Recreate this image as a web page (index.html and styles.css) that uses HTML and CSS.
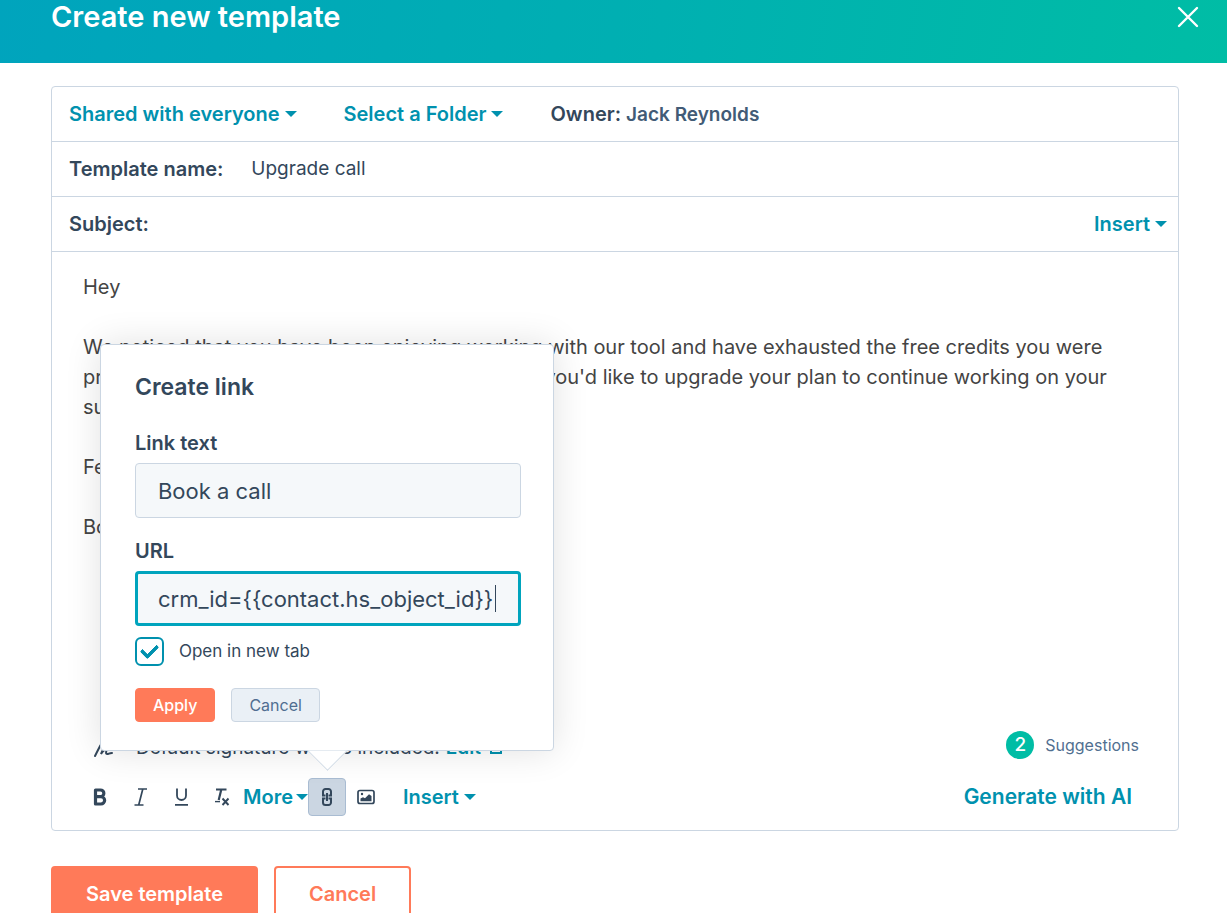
FILE: index.html
```
<!DOCTYPE html>
<html lang="en">
<head>
    <meta charset="UTF-8">
    <meta name="viewport" content="width=device-width, initial-scale=1.0">
    <title>Create new template</title>
    <link rel="stylesheet" href="styles.css">
</head>

<body>
    <header>
        <h1>Create new template</h1>
        <button class="close-button" aria-label="Close">
            <svg width="22" height="22" viewBox="0 0 22 22"><path d="M2 2l18 18M20 2L2 20" fill="none" stroke="#fff" stroke-width="2.4" stroke-linecap="round"/></svg>
        </button>
    </header>

    <main>
        <div class="template">
            <div class="row sharing">
                <button class="dropdown">Shared with everyone</button>
                <button class="dropdown">Select a Folder</button>
                <div class="owner">Owner: <span>Jack Reynolds</span></div>
            </div>
            <div class="row">
                <label for="template-name">Template name:</label>
                <input type="text" id="template-name" class="plain-input" value="Upgrade call">
            </div>
            <div class="row">
                <label for="subject">Subject:</label>
                <input type="text" id="subject" class="plain-input">
                <button class="dropdown">Insert</button>
            </div>

            <div class="editor">
                <p>Hey</p>
                <p>We noticed that you have been enjoying working with our tool and have exhausted the free credits you were<br>
                provided. Please book the call with us anytime if you'd like to upgrade your plan to continue working on your<br>
                success.</p>
                <p>Feel free to pick a time.</p>
                <p>Book a call</p>
            </div>

            <div class="signature">
                <div class="signature-note">
                    <svg width="20" height="20" viewBox="0 0 20 20"><path d="M1 18C5 10 8 3 11 3s-2 8-4 13c2-3 4-5 5-4s-1 4 1 4 2-1 5-1" fill="none" stroke="#33475b" stroke-width="2" stroke-linecap="round"/></svg>
                    <span>Default signature will be included.</span>
                    <a href="#">Edit
                        <svg width="14" height="14" viewBox="0 0 14 14"><path d="M6 2H2v10h10V8M8 1h5v5M13 1L6 8" fill="none" stroke="#0091ae" stroke-width="2"/></svg>
                    </a>
                </div>
                <div class="suggestions"><span class="count">2</span>Suggestions</div>
            </div>

            <div class="toolbar">
                <button class="tool" aria-label="Bold">
                    <svg width="18" height="20" viewBox="0 0 18 20"><path d="M4.500 3h5a3.300 3.300 0 0 1 0 6.700h-5zM4.500 9.700h5.500a3.600 3.600 0 0 1 0 7.300H4.500z" fill="none" stroke="#33475b" stroke-width="3.200" stroke-linejoin="round"/></svg>
                </button>
                <button class="tool" aria-label="Italic">
                    <svg width="18" height="20" viewBox="0 0 18 20"><path d="M6 2h9M2.500 18h9M10.800 2L6.700 18" fill="none" stroke="#33475b" stroke-width="1.700"/></svg>
                </button>
                <button class="tool" aria-label="Underline">
                    <svg width="18" height="20" viewBox="0 0 18 20"><path d="M4 1.500v7a4.500 4.500 0 0 0 9 0v-7M2 17.800h13" fill="none" stroke="#33475b" stroke-width="1.800"/></svg>
                </button>
                <button class="tool" aria-label="Clear formatting">
                    <svg width="18" height="20" viewBox="0 0 18 20"><path d="M2 2.500h10.500M7.300 2.500L4.700 13" fill="none" stroke="#33475b" stroke-width="2.200"/><path d="M1 14.600h5" stroke="#33475b" stroke-width="1.400"/><path d="M8.500 11.500l6 6.500M14.500 11.500l-6 6.500" fill="none" stroke="#33475b" stroke-width="1.900"/></svg>
                </button>
                <button class="dropdown more">More</button>
                <div class="link-tool">
                    <button class="tool active" aria-label="Link">
                        <svg width="18" height="20" viewBox="0 0 18 20"><path d="M7.500 8.500h-2.500V4.500a2.500 2.500 0 0 1 2.500-2.500h3A2.500 2.500 0 0 1 13 4.500v4h-2.500M7.500 11.500H5V15.500A2.500 2.500 0 0 0 7.500 18h3a2.500 2.500 0 0 0 2.500-2.500v-4h-2.500M9 6v8" fill="none" stroke="#33475b" stroke-width="2"/></svg>
                    </button>
                    <form class="popover">
                        <h2>Create link</h2>
                        <label for="link-text">Link text</label>
                        <input type="text" id="link-text" value="Book a call">
                        <label for="link-url">URL</label>
                        <input type="text" id="link-url" class="focused" value="crm_id={{contact.hs_object_id}}">
                        <div class="check-row">
                            <input type="checkbox" id="new-tab" checked>
                            <label for="new-tab">Open in new tab</label>
                        </div>
                        <div class="popover-actions">
                            <button type="button" class="apply">Apply</button>
                            <button type="button" class="cancel">Cancel</button>
                        </div>
                    </form>
                </div>
                <button class="tool" aria-label="Image">
                    <svg width="20" height="20" viewBox="0 0 20 20"><rect x="2" y="3.500" width="16" height="13" rx="2" fill="none" stroke="#33475b" stroke-width="1.700"/><path d="M4.500 14.300v-2.800l2.500-1.200 2 1 4-4 2.500 1.700v5.300z" fill="#33475b"/><circle cx="6" cy="7" r="1.200" fill="#33475b"/></svg>
                </button>
                <button class="dropdown insert">Insert</button>
                <button class="generate">Generate with AI</button>
            </div>
        </div>

        <div class="actions">
            <button class="save">Save template</button>
            <button class="discard">Cancel</button>
        </div>
    </main>
</body>
</html>
```
FILE: styles.css
```
* {
    box-sizing: border-box;
}

body {
    font-family: Inter, "Liberation Sans", sans-serif;
    font-size: 20px;
    line-height: 30px;
    color: #33475b;
    background-color: #fff;
    margin: 0;
    height: 100vh;
    overflow: hidden;
}

button,
input {
    font: inherit;
    color: inherit;
    margin: 0;
}

button {
    border: none;
    background: none;
    padding: 0;
    cursor: pointer;
    white-space: nowrap;
}

svg {
    display: block;
}

header {
    display: flex;
    justify-content: space-between;
    align-items: center;
    padding: 0 28px 29px 51px;
    background: linear-gradient(100deg, #00a4bd, #00afb2 50%, #00bda5);
}

h1 {
    margin: 0;
    font-size: 29px;
    line-height: 34px;
    font-weight: 600;
    color: white;
}

main {
    padding: 23px 48px 0 51px;
}

.template {
    border: 1px solid #cbd6e2;
    border-radius: 4px;
}

.row {
    display: flex;
    align-items: center;
    height: 55px;
    padding: 0 11px 0 17px;
    border-bottom: 1px solid #cbd6e2;
}

.row label,
.owner {
    font-weight: 600;
}

.sharing {
    gap: 47px;
}

.owner span {
    font-size: 19px;
    color: #425b76;
}

.plain-input {
    flex: 1;
    min-width: 0;
    border: none;
    outline: none;
    background: none;
    padding: 0;
    margin-left: 28px;
    font-size: 19px;
}

.dropdown {
    display: flex;
    align-items: center;
    gap: 5px;
    font-weight: 600;
    color: #0091ae;
}

.dropdown::after {
    content: "";
    border: 6px solid transparent;
    border-top-color: #0091ae;
    border-bottom: none;
}

.editor {
    min-height: 478px;
    padding: 20px 31px 0;
    color: #444;
}

.editor p {
    margin: 0 0 30px;
    white-space: nowrap;
}

.signature {
    display: flex;
    align-items: center;
    justify-content: space-between;
    padding: 0 39px 0 42px;
    height: 30px;
    font-size: 19px;
}

.signature-note {
    display: flex;
    align-items: center;
    padding-top: 6px;
}

.signature-note span {
    margin: 0 6px 0 22px;
}

.signature-note a {
    display: flex;
    align-items: center;
    gap: 8px;
    font-weight: 600;
    color: #0091ae;
    text-decoration: none;
}

.suggestions {
    display: flex;
    align-items: center;
    gap: 11px;
    font-size: 16px;
    color: #516f90;
}

.count {
    width: 28px;
    height: 28px;
    line-height: 28px;
    border-radius: 50%;
    background-color: #00bda5;
    color: white;
    font-size: 19px;
    font-weight: 500;
    text-align: center;
}

.toolbar {
    display: flex;
    align-items: center;
    height: 70px;
    padding: 4px 46px 0 27px;
}

.tool {
    display: flex;
    justify-content: center;
    align-items: center;
    width: 41px;
    height: 38px;
}

.link-tool {
    position: relative;
}

.active {
    width: 38px;
    background-color: #cbd6e2;
    border: 1px solid #a9bcd2;
    border-radius: 4px;
}

.more {
    gap: 3px;
}

.insert {
    margin-left: 16px;
}

.generate {
    margin-left: auto;
    font-size: 21px;
    font-weight: 600;
    color: #0091ae;
}

/* link popover, centred over its toolbar button */
.popover {
    position: absolute;
    left: 50%;
    bottom: calc(100% + 27px);
    transform: translateX(-50%);
    width: 454px;
    padding: 27px 32px 28px 34px;
    background-color: white;
    border: 1px solid #cbd6e2;
    border-radius: 4px;
    box-shadow: 0 0 36px rgba(0, 0, 0, 0.12);
}

.popover::after {
    content: "";
    position: absolute;
    left: 50%;
    bottom: -15px;
    width: 28px;
    height: 28px;
    margin-left: -14px;
    background-color: white;
    border: solid #cbd6e2;
    border-width: 0 1px 1px 0;
    transform: rotate(45deg);
    clip-path: polygon(100% 0, 100% 100%, 0 100%);
}

.popover h2 {
    margin: 0 0 26px;
    font-size: 23px;
    line-height: 30px;
    font-weight: 600;
}

.popover > label {
    display: block;
    font-weight: 600;
}

.popover > input {
    display: block;
    width: 100%;
    height: 55px;
    margin: 5px 0 18px;
    padding: 0 22px;
    font-size: 22px;
    background-color: #f5f8fa;
    border: 1px solid #cbd6e2;
    border-radius: 4px;
    outline: none;
}

.popover > .focused {
    border: 3px solid #00a4bd;
    margin-bottom: 10px;
    padding: 0 20px;
    background-image: linear-gradient(#33475b, #33475b);
    background-size: 1px 27px;
    background-position: right 22px center;
    background-repeat: no-repeat;
}

.check-row {
    display: flex;
    align-items: center;
    gap: 15px;
    font-size: 17px;
}

.check-row input {
    appearance: none;
    position: relative;
    width: 29px;
    height: 29px;
    background-color: white;
    border: 2px solid #0091ae;
    border-radius: 6px;
}

.check-row input:checked::after {
    content: "";
    position: absolute;
    left: 7px;
    top: 2px;
    width: 11px;
    height: 17px;
    box-sizing: border-box;
    border: solid #0091ae;
    border-width: 0 4px 4px 0;
    border-radius: 2px;
    transform: rotate(45deg);
}

.popover-actions {
    display: flex;
    gap: 16px;
    margin-top: 22px;
}

.popover-actions button {
    height: 34px;
    padding: 0 17px;
    font-size: 16px;
    border: 1px solid #cbd6e2;
    border-radius: 4px;
}

.popover-actions .apply {
    background-color: #ff7a59;
    border-color: #ff7a59;
    color: white;
    font-weight: 500;
}

.cancel {
    background-color: #eaf0f6;
    color: #506e91;
}

.actions {
    display: flex;
    gap: 16px;
    margin-top: 35px;
}

.actions button {
    height: 56px;
    padding: 0 33px;
    font-weight: 600;
    border: 2px solid #ff7a59;
    border-radius: 4px;
}

.save {
    background-color: #ff7a59;
    color: white;
}

.discard {
    color: #ff7a59;
}
```
